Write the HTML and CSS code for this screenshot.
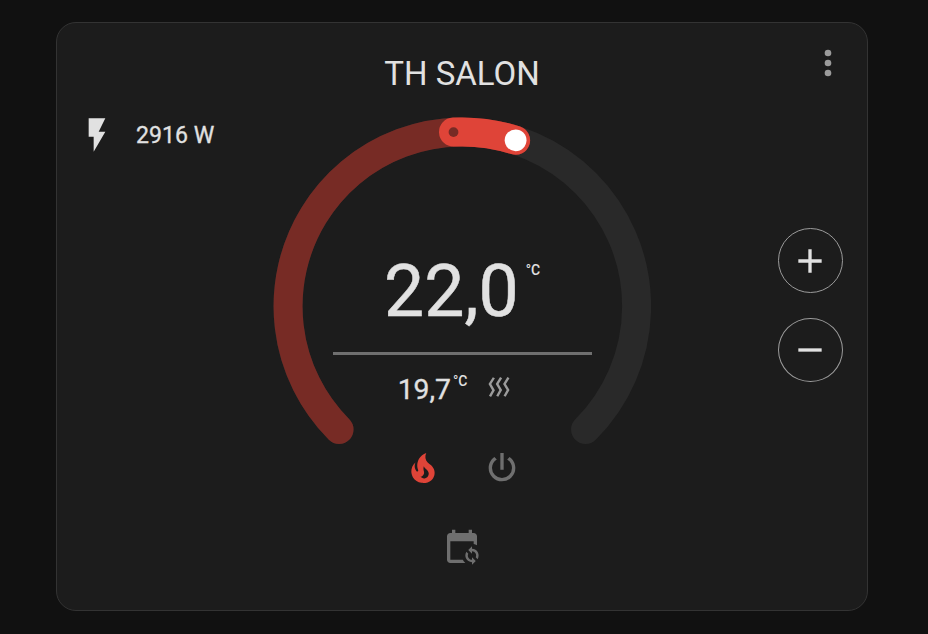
FILE: index.html
```html
<!DOCTYPE html>
<html lang="en">
<head>
    <meta charset="UTF-8">
    <meta name="viewport" content="width=device-width, initial-scale=1.0">
    <title>TH SALON</title>
    <link rel="stylesheet" href="styles.css">
</head>
<body>
    <div class="card">
        <header class="card-header">
            <h1>TH SALON</h1>
            <svg class="icon more" viewBox="0 0 24 24"><path d="M12,16A2,2 0 0,1 14,18A2,2 0 0,1 12,20A2,2 0 0,1 10,18A2,2 0 0,1 12,16M12,10A2,2 0 0,1 14,12A2,2 0 0,1 12,14A2,2 0 0,1 10,12A2,2 0 0,1 12,10M12,4A2,2 0 0,1 14,6A2,2 0 0,1 12,8A2,2 0 0,1 10,6A2,2 0 0,1 12,4Z"/></svg>
        </header>

        <main class="card-body">
            <div class="power">
                <svg class="icon" viewBox="0 0 24 24"><path d="M7,2V13H10V22L17,10H13L17,2H7Z"/></svg>
                <span>2916 W</span>
            </div>

            <div class="dial">
                <svg class="ring" viewBox="0 0 378 328">
                    <path class="track" d="M66.05 312.45A174.3 174.3 0 1 1 312.55 312.45"/>
                    <path class="heat" d="M66.05 312.45A174.3 174.3 0 0 1 242.6 23.3"/>
                    <path class="active" d="M180.5 15.1A174.3 174.3 0 0 1 242.6 23.3"/>
                    <circle class="current-dot" cx="180.5" cy="15.1" r="4.9"/>
                    <circle class="target-dot" cx="242.6" cy="23.3" r="10.9"/>
                </svg>
                <div class="readout">
                    <div class="target">22,0<sup>°C</sup></div>
                    <div class="line"></div>
                    <div class="current">
                        <span>19,7<sup>°C</sup></span>
                        <svg class="icon wave" viewBox="0 0 24 24"><path d="M8.5 4.5L5.4 9.5L8.5 14.7L5.2 20.5L3.4 19.6L6.1 14.7L3 9.5L6.7 3.6L8.5 4.5M14.7 4.4L11.6 9.5L14.7 14.5L11.4 20.3L9.6 19.4L12.3 14.5L9.2 9.5L12.9 3.5L14.7 4.4M21 4.4L17.9 9.5L21 14.5L17.7 20.3L15.9 19.4L18.6 14.5L15.5 9.5L19.2 3.5L21 4.4"/></svg>
                    </div>
                </div>
            </div>

            <div class="buttons">
                <button class="round-button" aria-label="Increase"><svg class="icon" viewBox="0 0 24 24"><path d="M19,13H13V19H11V13H5V11H11V5H13V11H19V13Z"/></svg></button>
                <button class="round-button" aria-label="Decrease"><svg class="icon" viewBox="0 0 24 24"><path d="M19,13H5V11H19V13Z"/></svg></button>
            </div>
        </main>

        <div class="modes">
            <svg class="icon on" viewBox="0 0 24 24"><path d="M17.66 11.2C17.43 10.9 17.15 10.64 16.89 10.38C16.22 9.78 15.46 9.35 14.82 8.72C13.33 7.26 13 4.85 13.95 3C13 3.23 12.17 3.75 11.46 4.32C8.87 6.4 7.85 10.07 9.07 13.22C9.11 13.32 9.15 13.42 9.15 13.55C9.15 13.77 9 13.97 8.8 14.05C8.57 14.15 8.33 14.09 8.14 13.93C8.08 13.88 8.04 13.83 8 13.76C6.87 12.33 6.69 10.28 7.45 8.64C5.78 10 4.87 12.3 5 14.47C5.06 14.97 5.12 15.47 5.29 15.97C5.43 16.57 5.7 17.17 6 17.7C7.08 19.43 8.95 20.67 10.96 20.92C13.1 21.19 15.39 20.8 17.03 19.32C18.86 17.66 19.5 15 18.56 12.72L18.43 12.46C18.22 12 17.66 11.2 17.66 11.2M14.5 17.5C14.22 17.74 13.76 18 13.4 18.1C12.28 18.5 11.16 17.94 10.5 17.28C11.69 17 12.4 16.12 12.61 15.23C12.78 14.43 12.46 13.77 12.33 13C12.21 12.26 12.23 11.63 12.5 10.94C12.69 11.32 12.89 11.7 13.13 12C13.9 13 15.11 13.44 15.37 14.8C15.41 14.94 15.43 15.08 15.43 15.23C15.46 16.05 15.1 16.95 14.5 17.5Z"/></svg>
            <svg class="icon" viewBox="0 0 24 24"><path d="M16.56,5.44L15.11,6.89C16.84,7.94 18,9.83 18,12A6,6 0 0,1 12,18A6,6 0 0,1 6,12C6,9.83 7.16,7.94 8.88,6.88L7.44,5.44C5.36,6.88 4,9.28 4,12A8,8 0 0,0 12,20A8,8 0 0,0 20,12C20,9.28 18.64,6.88 16.56,5.44M13,3H11V13H13"/></svg>
        </div>
        <div class="modes schedule">
            <svg class="icon" viewBox="0 0 24 24"><path d="M18 11V12.5C21.19 12.5 23.09 16.05 21.33 18.71L20.24 17.62C21.06 15.96 19.85 14 18 14V15.5L15.75 13.25L18 11M18 22V20.5C14.81 20.5 12.91 16.95 14.67 14.29L15.76 15.38C14.94 17.04 16.15 19 18 19V17.5L20.25 19.75L18 22M19 3H18V1H16V3H8V1H6V3H5C3.89 3 3 3.9 3 5V19C3 20.1 3.89 21 5 21H14C13.36 20.45 12.86 19.77 12.5 19H5V8H19V9.59C19.71 9.7 20.39 9.94 21 10.31V5C21 3.9 20.11 3 19 3Z"/></svg>
        </div>
    </div>
</body>
</html>
```
FILE: styles.css
```css
* {
    box-sizing: border-box;
}
body {
    margin: 0;
    padding: 22px 60px 0 56px;
    background-color: #111111;
    color: #e1e1e1;
    font-family: Roboto, sans-serif;
}
.card {
    height: 589px;
    background-color: #1c1c1c;
    border: 1px solid #333333;
    border-radius: 20px;
}
.icon {
    display: block;
    width: 40px;
    height: 40px;
    fill: currentColor;
}
.card-header {
    display: grid;
    grid-template-columns: 59px 1fr 59px;
    height: 94px;
    padding-top: 20px;
}
h1 {
    grid-column: 2;
    margin: 11px 0 0;
    font-size: 33px;
    font-weight: 400;
    line-height: 40px;
    text-align: center;
}
.more {
    color: #9b9b9b;
}
.card-body {
    display: grid;
    grid-template-columns: 1fr 378px 1fr;
    height: 328px;
}
.power {
    display: flex;
    align-items: center;
    gap: 20px;
    height: 40px;
    margin-top: -2px;
    padding-left: 20px;
    font-size: 23.1px;
}
.power span {
    margin-left: -1px;
    -webkit-text-stroke: 0.3px;
}
.dial {
    display: grid;
}
.ring, .readout {
    grid-area: 1 / 1;
}
.ring {
    width: 378px;
    height: 328px;
    fill: none;
    stroke-width: 29px;
    stroke-linecap: round;
}
.track {
    stroke: #292929;
}
.heat {
    stroke: #772b25;
}
.active {
    stroke: #df4438;
}
.current-dot {
    fill: #772b25;
}
.target-dot {
    fill: #ffffff;
}
.readout {
    display: flex;
    flex-direction: column;
    align-items: center;
    padding-top: 133px;
}
.target {
    display: flex;
    font-size: 71.5px;
    line-height: 84px;
    -webkit-text-stroke: 0.5px;
}
sup {
    font-size: 14px;
    font-weight: 500;
    line-height: 16px;
    letter-spacing: -0.1px;
    -webkit-text-stroke: 0;
}
.target sup {
    margin: 12px 0 0 7px;
}
.line {
    width: 259px;
    height: 3px;
    margin-top: 18px;
    background-color: #6f6f6f;
}
.current {
    display: flex;
    align-items: center;
    gap: 18px;
    height: 40px;
    margin-top: 12px;
    padding-right: 13px;
    font-size: 28.3px;
    line-height: 34px;
}
.current span {
    display: flex;
    padding-top: 5px;
    -webkit-text-stroke: 0.3px;
}
.current sup {
    margin-left: 2px;
}
.wave {
    width: 28px;
    height: 28px;
    color: #9b9b9b;
}
.buttons {
    display: flex;
    flex-direction: column;
    align-items: flex-end;
    gap: 25px;
    padding: 111px 24px 0 0;
}
.round-button {
    display: grid;
    place-items: center;
    width: 65px;
    height: 65px;
    padding: 0 2px 0 0;
    background: none;
    border: 1px solid #9b9b9b;
    border-radius: 50%;
    color: #e1e1e1;
}
.round-button:last-child {
    height: 64px;
}
.modes {
    display: flex;
    justify-content: center;
    gap: 39px;
    margin-top: 3px;
    color: #6f6f6f;
}
.modes .on {
    color: #df4438;
}
.schedule {
    margin-top: 40px;
}
```
